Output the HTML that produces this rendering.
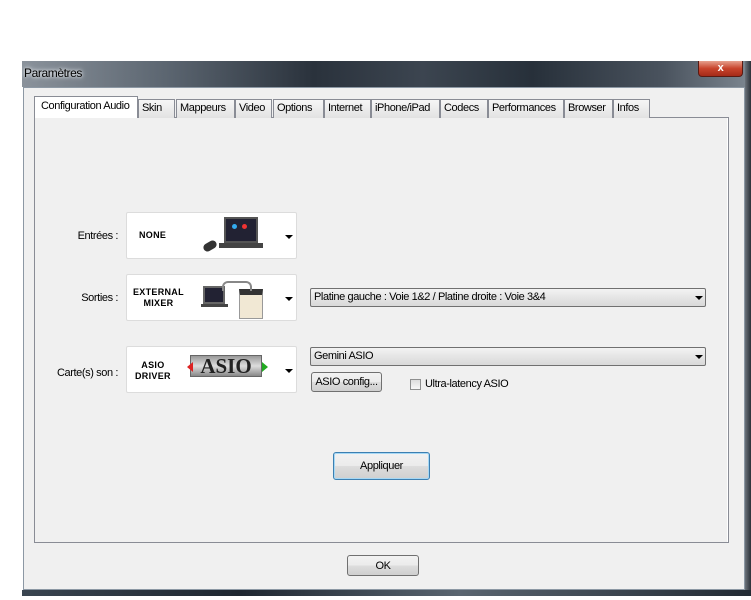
<!DOCTYPE html>
<html><head><meta charset="utf-8"><style>
*{margin:0;padding:0;box-sizing:border-box}
body{width:751px;height:600px;background:#fff;position:relative;overflow:hidden;font-family:"Liberation Sans",sans-serif;font-size:11px;color:#000;letter-spacing:-0.4px}
.a{position:absolute}
.title{left:22px;top:61px;width:729px;height:26px;background:linear-gradient(90deg,#8a929b 0%,#5b6570 20%,#2a323c 40%,#3c4550 55%,#27303a 70%,#4a535e 88%,#7d8791 100%)}
.title span{position:absolute;left:2px;top:5px;font-size:12px;color:#000;text-shadow:0 0 6px #e8eef4,0 0 3px #fff}
.close{left:698px;top:61px;width:45px;height:16px;border:1px solid #5a1a12;border-top:none;border-radius:0 0 4px 4px;background:linear-gradient(#e6a08e,#c8442c 50%,#a52a18);color:#fff;font-weight:bold;text-align:center;font-size:11px;line-height:14px}
.client{left:23px;top:87px;width:722px;height:503px;background:#f0f0f0;border:1px solid #8c98a4}
.rb{left:745px;top:61px;width:6px;height:535px;background:linear-gradient(90deg,#6c737b,#2a3038)}
.bb{left:22px;top:590px;width:729px;height:6px;background:linear-gradient(90deg,#3a4550,#1e2630 30%,#5a6570 60%,#222a33)}
.panel{left:34px;top:117px;width:695px;height:426px;background:#f0f0f0;border:1px solid #898c95;box-shadow:inset -1px 0 #fff}
.tab{top:99px;height:19px;border:1px solid #898c95;border-bottom:none;background:linear-gradient(#f6f6f6,#e2e2e2);padding:2px 0 0 3px;white-space:nowrap}
.sel{top:96px;height:22px;background:#fff;padding:3px 0 0 6px;z-index:2}
.img{width:171px;height:47px;background:#fff;border:1px solid #dcdcdc;border-radius:2px}
.lbl{text-align:right;width:100px;left:18px}
.arr{position:absolute;width:0;height:0;border-left:4px solid transparent;border-right:4px solid transparent;border-top:4px solid #000}
.combo{left:310px;width:396px;height:19px;border:1px solid #707070;border-radius:2px;background:linear-gradient(#f3f3f3,#e5e5e5 50%,#d9d9d9);padding:2px 0 0 3px}
.btn{border:1px solid #707070;border-radius:3px;background:linear-gradient(#f2f2f2,#ebebeb 50%,#dddddd 51%,#cfcfcf);text-align:center}
.big{font-weight:bold;font-size:9px;text-align:center;letter-spacing:0.3px;line-height:11px}
</style></head><body>
<div class="a title"><span>Paramètres</span></div>
<div class="a close">x</div>
<div class="a client"></div>
<div class="a rb"></div>
<div class="a bb"></div>
<div class="a panel"></div>
<div class="a tab sel" style="left:34px;width:104px">Configuration Audio</div>
<div class="a tab" style="left:138px;width:37px">Skin</div>
<div class="a tab" style="left:176px;width:59px">Mappeurs</div>
<div class="a tab" style="left:235px;width:37px">Video</div>
<div class="a tab" style="left:273px;width:51px">Options</div>
<div class="a tab" style="left:324px;width:47px">Internet</div>
<div class="a tab" style="left:371px;width:69px">iPhone/iPad</div>
<div class="a tab" style="left:440px;width:48px">Codecs</div>
<div class="a tab" style="left:488px;width:76px">Performances</div>
<div class="a tab" style="left:564px;width:49px">Browser</div>
<div class="a tab" style="left:613px;width:37px">Infos</div>

<div class="a lbl" style="top:230px">Entrées :</div>
<div class="a img" style="left:126px;top:212px">
 <div class="a big" style="left:12px;top:17px">NONE</div>
 <div class="a" style="left:97px;top:4px;width:34px;height:26px;background:#223;border:2px solid #555"><div class="a" style="left:6px;top:5px;width:5px;height:5px;background:#3ae;border-radius:3px"></div><div class="a" style="left:16px;top:5px;width:5px;height:5px;background:#e33;border-radius:3px"></div></div>
 <div class="a" style="left:92px;top:30px;width:44px;height:5px;background:#444"></div>
 <div class="a" style="left:76px;top:29px;width:14px;height:8px;background:#333;border-radius:6px;transform:rotate(-30deg)"></div>
 <div class="arr" style="left:158px;top:22px"></div>
</div>
<div class="a lbl" style="top:292px">Sorties :</div>
<div class="a img" style="left:126px;top:274px">
 <div class="a big" style="left:6px;top:12px">EXTERNAL<br>MIXER</div>
 <div class="a" style="left:76px;top:11px;width:22px;height:18px;background:#223;border:2px solid #666"></div>
 <div class="a" style="left:74px;top:29px;width:27px;height:3px;background:#444"></div>
 <div class="a" style="left:112px;top:14px;width:24px;height:30px;background:#f1e8d4;border:1px solid #999;border-top:6px solid #333"></div>
 <div class="a" style="left:95px;top:6px;width:30px;height:10px;border:2px solid #888;border-bottom:none;border-radius:6px 6px 0 0"></div>
 <div class="arr" style="left:158px;top:22px"></div>
</div>
<div class="a lbl" style="top:367px">Carte(s) son :</div>
<div class="a img" style="left:126px;top:346px">
 <div class="a big" style="left:8px;top:13px">ASIO<br>DRIVER</div>
 <div class="a" style="left:63px;top:8px;width:72px;height:22px;background:linear-gradient(#999,#ddd,#888);border:1px solid #666;font-family:'Liberation Serif',serif;font-weight:bold;font-size:21px;color:#222;text-align:center;line-height:21px;letter-spacing:0">ASIO</div>
 <div class="a" style="left:60px;top:15px;border-right:6px solid #d22;border-top:5px solid transparent;border-bottom:5px solid transparent"></div>
 <div class="a" style="left:135px;top:15px;border-left:6px solid #2a2;border-top:5px solid transparent;border-bottom:5px solid transparent"></div>
 <div class="arr" style="left:158px;top:22px"></div>
</div>

<div class="a combo" style="top:288px">Platine gauche : Voie 1&amp;2 / Platine droite : Voie 3&amp;4<div class="arr" style="left:384px;top:7px"></div></div>
<div class="a combo" style="top:347px">Gemini ASIO<div class="arr" style="left:384px;top:7px"></div></div>
<div class="a btn" style="left:311px;top:372px;width:71px;height:20px;padding-top:3px">ASIO config...</div>
<div class="a" style="left:410px;top:379px;width:11px;height:11px;border:1px solid #8e8f8f;background:linear-gradient(#ddd,#f8f8f8)"></div>
<div class="a" style="left:425px;top:378px">Ultra-latency ASIO</div>
<div class="a btn" style="left:333px;top:452px;width:97px;height:28px;padding-top:7px;border-color:#3c7fb1;box-shadow:inset 0 0 0 1px #a6d8f5">Appliquer</div>
<div class="a btn" style="left:347px;top:555px;width:72px;height:21px;padding-top:4px">OK</div>
</body></html>
